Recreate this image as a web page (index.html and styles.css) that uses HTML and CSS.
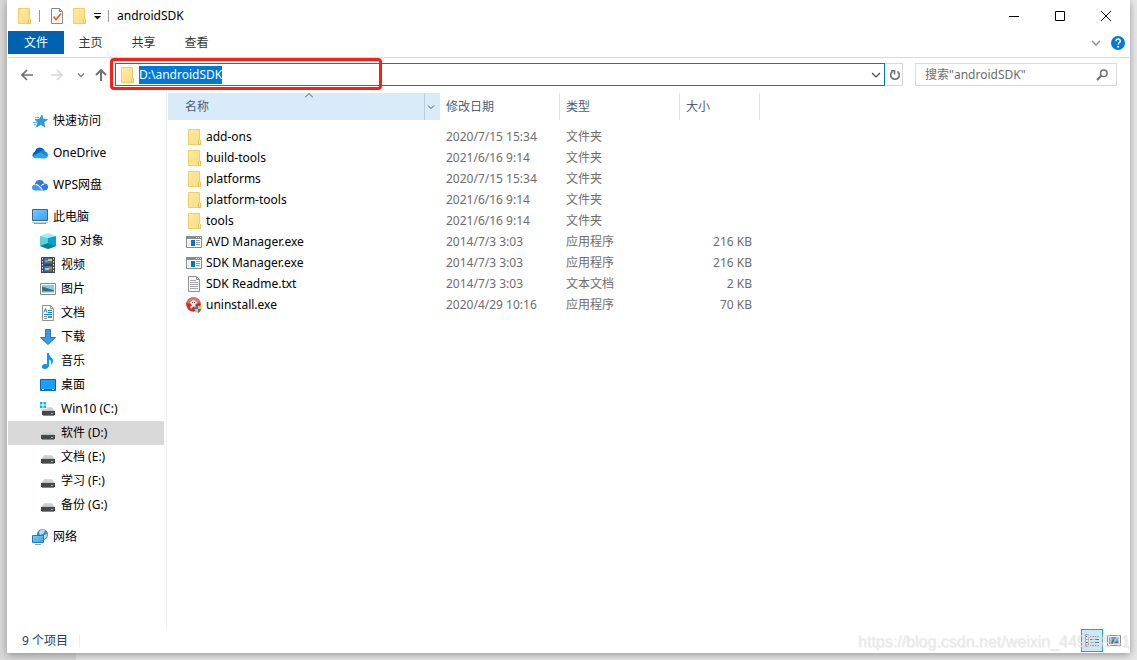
FILE: index.html
```html
<!DOCTYPE html>
<html lang="zh-CN">
<head>
<meta charset="utf-8">
<title>androidSDK</title>
<link rel="stylesheet" href="styles.css">
</head>
<body>
<svg class="defs" aria-hidden="true">
  <defs>
    <linearGradient id="gFolder" x1="0" y1="0" x2="1" y2="1"><stop offset="0" stop-color="#ffe9a2"/><stop offset="1" stop-color="#fcdc80"/></linearGradient>
    <linearGradient id="gScreen" x1="0" y1="0" x2="1" y2="1"><stop offset="0" stop-color="#7ccbff"/><stop offset="1" stop-color="#2ea3f8"/></linearGradient>
    <linearGradient id="gDrive" x1="0" y1="0" x2="0" y2="1"><stop offset="0" stop-color="#dcdfe0"/><stop offset="1" stop-color="#bcc0c2"/></linearGradient>
  </defs>
  <symbol id="folder" viewBox="0 0 16 16"><path d="M2.500.500h11v10.500h1v4.500h-12z" fill="url(#gFolder)" stroke="#f0cf62"/><path d="M12.500 15.500v-4l1-1 1 1v4z" fill="#ffe69a" stroke="#e9c452"/></symbol>
  <symbol id="app" viewBox="0 0 16 16"><path d="M.500 2.500h15v11H.500z" fill="#fff" stroke="#878c90"/><path d="M0 2h16v3H0z" fill="#878c90"/><path d="M10 3h1v1h-1zM12 3h1v1h-1zM14 3h1v1h-1z" fill="#fff"/><path d="M2 6h2v6H2z" fill="#e8e8e8"/><path d="M5 6h4v6H5z" fill="#0073d1"/><path d="M10 6.500h4M10 8.500h4M10 10.500h4" stroke="#999"/></symbol>
  <symbol id="text" viewBox="0 0 16 16"><path d="M2.500.500h8l3 3v12h-11z" fill="#fafafa" stroke="#909090"/><path d="M10.500.500v3h3" fill="none" stroke="#909090"/><path d="M4 4.500h6M4 6.500h8M4 8.500h8M4 10.500h8M4 12.500h8" stroke="#a8a8a8"/></symbol>
  <symbol id="drive" viewBox="0 0 16 16"><path d="M4 6h8l2.500 4h-13z" fill="url(#gDrive)"/><path d="M1 10h14v4H1z" fill="#45484a"/><path d="M2 14h12v1H2z" fill="#888"/><path d="M11 12h2v1h-2z" fill="#5dff56"/></symbol>
</svg>

<div class="window">
  <header class="titlebar">
    <svg class="icon"><use href="#folder"/></svg>
    <span class="bar"></span>
    <button class="plain" aria-label="属性"><svg class="icon" viewBox="0 0 16 16"><path d="M2.500.500h8l3 3v12h-11z" fill="#f8f8f8" stroke="#848a90"/><path d="M10.500.500v3h3" fill="none" stroke="#848a90"/><path d="M4.500 8.500l2.500 3 5-6" fill="none" stroke="#ee6030" stroke-width="1.800"/></svg></button>
    <button class="plain" aria-label="新建文件夹"><svg class="icon"><use href="#folder"/></svg></button>
    <button class="plain" aria-label="自定义快速访问工具栏"><svg class="tiny" viewBox="0 0 8 8"><path d="M1 1.500h7" stroke="#111"/><path d="M1 4h7L4.500 7.500z" fill="#111"/></svg></button>
    <span class="bar"></span>
    <h1 class="title">androidSDK</h1>
    <div class="controls">
      <button class="plain" aria-label="最小化"><svg class="ctl" viewBox="0 0 12 12"><path d="M1 6.500h10" stroke="#000"/></svg></button>
      <button class="plain" aria-label="最大化"><svg class="ctl" viewBox="0 0 12 12"><path d="M1.500 1.500h9v9h-9z" fill="none" stroke="#000"/></svg></button>
      <button class="plain" aria-label="关闭"><svg class="ctl" viewBox="0 0 12 12"><path d="M1 1l10 10M11 1L1 11" stroke="#000"/></svg></button>
    </div>
  </header>

  <nav class="ribbon">
    <button class="tab tab-file">文件</button>
    <button class="tab">主页</button>
    <button class="tab">共享</button>
    <button class="tab">查看</button>
    <div class="ribbon-end">
      <button class="plain" aria-label="展开功能区"><svg class="chev" viewBox="0 0 10 10"><path d="M1 3l4 4 4-4" fill="none" stroke="#8c8c8c" stroke-width="1.300"/></svg></button>
      <button class="plain" aria-label="帮助"><svg class="help" viewBox="0 0 14 14"><circle cx="7" cy="7" r="7" fill="#0078d7"/><path d="M5 5.300c0-3 4.300-2.800 4.300-.3C9.300 6.700 7.200 6.700 7.200 8.500" fill="none" stroke="#fff" stroke-width="1.500"/><circle cx="7.200" cy="10.700" r="1" fill="#fff"/></svg></button>
    </div>
  </nav>

  <div class="navbar">
    <button class="plain back" aria-label="后退"><svg class="arrow" viewBox="0 0 14 14"><path d="M13 7H2M7 2L2 7l5 5" fill="none" stroke="#707070" stroke-width="1.700"/></svg></button>
    <button class="plain forward" aria-label="前进"><svg class="arrow" viewBox="0 0 14 14"><path d="M1 7h11M7 2l5 5-5 5" fill="none" stroke="#d8d8d8" stroke-width="1.700"/></svg></button>
    <button class="plain recent" aria-label="最近位置"><svg class="tiny" viewBox="0 0 8 8"><path d="M1 2.500l3 3 3-3" fill="none" stroke="#808080" stroke-width="1.500"/></svg></button>
    <button class="plain up" aria-label="上移"><svg class="arrow" viewBox="0 0 14 14"><path d="M7 13V2M2 7l5-5 5 5" fill="none" stroke="#707070" stroke-width="1.900"/></svg></button>
    <div class="address-wrap">
      <div class="address">
        <svg class="icon"><use href="#folder"/></svg>
        <input id="path" class="path" type="text" aria-label="地址" value="D:\androidSDK" spellcheck="false">
        <button class="plain" aria-label="以前的位置"><svg class="chev" viewBox="0 0 10 10"><path d="M1 3l4 4 4-4" fill="none" stroke="#444" stroke-width="1.200"/></svg></button>
      </div>
      <button class="refresh" aria-label="刷新"><svg class="ctl" viewBox="0 0 12 12"><path d="M8.500 2.500A4.300 4.300 0 1 1 3.500 2.500" fill="none" stroke="#707070" stroke-width="1.600"/><path d="M2 1.800h3.500v3.700" fill="none" stroke="#707070" stroke-width="1.600"/></svg></button>
      <span class="callout"></span>
    </div>
    <div class="search">
      <input class="query" type="text" aria-label="搜索" placeholder="搜索&quot;androidSDK&quot;">
      <svg class="ctl" viewBox="0 0 12 12"><circle cx="7.800" cy="4.200" r="3.300" fill="none" stroke="#707070" stroke-width="1.500"/><path d="M5.300 6.700L1 11" stroke="#707070" stroke-width="2"/></svg>
    </div>
  </div>

  <main class="body">
    <aside class="tree">
      <a class="node" href="#"><svg class="icon" viewBox="0 0 16 16"><path d="M10 2l1 4 4.500.500-3.600 2.800 1 4.700L9 11.500 4.500 14l1.300-4.700L3 6.500l4.500-.5z" fill="#2b9be8" stroke="#1b7fc8" stroke-width=".6"/><path d="M3 4.500h4M1 9.500h4M2 11.500h2" stroke="#59b4ef"/></svg>快速访问</a>
      <a class="node" href="#"><svg class="icon" viewBox="0 0 16 16"><path d="M3 6.500a5 5 0 0 1 9.300-1.500l-3 4L1 12A4 4 0 0 1 3 6.500z" fill="#0a63b8"/><path d="M8 7C10 4.500 12.500 4.500 13.300 6.500a3.500 3.500 0 0 1 0 6.800H9z" fill="#1587d9"/><path d="M.500 11L8 7.300l7.700 4.200a3 3 0 0 1-2.700 1.800H3.500a3 3 0 0 1-3-2.300z" fill="#28a8ea"/></svg>OneDrive</a>
      <a class="node" href="#"><svg class="icon" viewBox="0 0 16 16"><path d="M3 7a4.800 4.800 0 0 1 9.300-.5 3.500 3.500 0 0 1 .5 7H9.500L4 7.500z" fill="#2f75f5"/><path d="M0 10.500C0 8 2.800 6.800 4.800 8.100l5 5.400H3A3 3 0 0 1 0 10.500z" fill="#3a9af8"/><path d="M4 7.700c2-.5 4 2 6.500 5.300M9 9c1-1.300 2-2 3.300-2" fill="none" stroke="#fff" stroke-width="1.100"/></svg>WPS网盘</a>
      <div class="group">
        <a class="node" href="#"><svg class="icon" viewBox="0 0 16 16"><path d="M.500.500h15v11H.500z" fill="url(#gScreen)" stroke="#39698c"/><path d="M2 14.500h12" stroke="#8d9ba5"/><path d="M0 13.500h16" stroke="#c3ccd2"/></svg>此电脑</a>
        <a class="node child" href="#"><svg class="icon" viewBox="0 0 16 16"><path d="M0 3l8-3 8 3-8 2z" fill="#a5edf1"/><path d="M0 3l8 2v11l-8-3z" fill="#5fcfda"/><path d="M16 3L8 5v11l8-3z" fill="#07a3cf"/><path d="M0 13l8-3 8 3-8 3z" fill="#087e93"/></svg>3D 对象</a>
        <a class="node child" href="#"><svg class="icon" viewBox="0 0 16 16"><path d="M1 0h14v16H1z" fill="#444"/><path d="M2.500 1v15M13.500 1v15" stroke="#eee" stroke-dasharray="1.500 1.500"/><path d="M4 1h8v6H4zM4 9h8v6H4z" fill="#3475c8"/><path d="M5 3h3v2H5zM9 10h3v2H9z" fill="#ed7b28"/><path d="M8 2h4v2H8zM5 11h4v2H5z" fill="#e8c931"/><path d="M4 6h8v1H4zM4 14h8v1H4z" fill="#38762b"/></svg>视频</a>
        <a class="node child" href="#"><svg class="icon" viewBox="0 0 16 16"><path d="M.500 2.500h15v11H.500z" fill="#fff" stroke="#8a8a8a"/><path d="M2 4h12v8H2z" fill="#87c9ee"/><path d="M2 6c5 0 8 3 12 3v3H2z" fill="#397175"/><path d="M2 10.500h12V12H2z" fill="#c1d9df"/></svg>图片</a>
        <a class="node child" href="#"><svg class="icon" viewBox="0 0 16 16"><path d="M2.500.500h8l3 3v12h-11z" fill="#fff" stroke="#909090"/><path d="M10.500.500v3h3" fill="none" stroke="#909090"/><path d="M4 7.500l1.500-4 1.500 4M8 5.500h4M8 7.500h4M4 9.500h8" fill="none" stroke="#0783cc"/><path d="M4 11.500h3M4 13.500h3" stroke="#888"/><path d="M8 11h4v2H8z" fill="#4793ad"/></svg>文档</a>
        <a class="node child" href="#"><svg class="icon" viewBox="0 0 16 16"><path d="M5.500.500h5v8h5L8 15.500.500 8.500h5z" fill="#3c9ae4" stroke="#2278bd"/></svg>下载</a>
        <a class="node child" href="#"><svg class="icon" viewBox="0 0 16 16"><path d="M7 0h2c0 4 4 4.500 4 8 0 2-1 3-2 4 1-3 0-5-2-5.500V12c0 3-2.500 4-4.500 4C1 16 1 12 4.500 11c1-.3 2 0 2.500.300z" fill="#0a97f3"/></svg>音乐</a>
        <a class="node child" href="#"><svg class="icon" viewBox="0 0 16 16"><path d="M.500 2.500h15v11H.500z" fill="#1aa0fb" stroke="#0567ae"/><path d="M1 12h14v2H1z" fill="#0567ae"/><path d="M2 12.500h2M12 12.500h2" stroke="#fff"/></svg>桌面</a>
        <a class="node child" href="#"><svg class="icon" viewBox="0 0 16 16"><path d="M0 1h2.500v2.500H0zM3.500 1H6v2.500H3.500zM0 4.500h2.500V7H0zM3.500 4.500H6V7H3.500z" fill="#00b7ef"/><path d="M7 6h5l2.500 4h-13L4 8h3z" fill="url(#gDrive)"/><path d="M2 10h13v4H2z" fill="#45484a"/><path d="M3 14h11v1H3z" fill="#888"/><path d="M11 12h2v1h-2z" fill="#5dff56"/></svg>Win10 (C:)</a>
        <a class="node child current" href="#"><svg class="icon"><use href="#drive"/></svg>软件 (D:)</a>
        <a class="node child" href="#"><svg class="icon"><use href="#drive"/></svg>文档 (E:)</a>
        <a class="node child" href="#"><svg class="icon"><use href="#drive"/></svg>学习 (F:)</a>
        <a class="node child" href="#"><svg class="icon"><use href="#drive"/></svg>备份 (G:)</a>
      </div>
      <a class="node" href="#"><svg class="icon" viewBox="0 0 16 16"><circle cx="10.500" cy="5.500" r="5.500" fill="#4b8bab"/><path d="M7 3c2-3 5-3 6-1l-2 3-3 1zM12 6l3-1c0 3-1 4-3 5z" fill="#b9dde9"/><path d="M.500 6.500h11v7H.500z" fill="url(#gScreen)" stroke="#2778aa"/><path d="M3 15.500h6" stroke="#8aa2b0"/></svg>网络</a>
    </aside>

    <section class="files">
      <table class="list">
        <colgroup><col class="c-name"><col class="c-date"><col class="c-type"><col class="c-size"></colgroup>
        <thead>
          <tr>
            <th class="sorted"><div class="head"><span class="label">名称</span><button class="drop" aria-label="筛选名称"><svg class="tiny" viewBox="0 0 8 8"><path d="M1 2.500l3 3 3-3" fill="none" stroke="#555"/></svg></button></div><svg class="tiny sort" viewBox="0 0 8 8"><path d="M0 4.500l4-4 4 4" fill="none" stroke="#555"/></svg></th>
            <th>修改日期</th><th>类型</th><th>大小</th>
          </tr>
        </thead>
        <tbody>
          <tr><td><span class="file"><svg class="icon"><use href="#folder"/></svg>add-ons</span></td><td>2020/7/15 15:34</td><td>文件夹</td><td></td></tr>
          <tr><td><span class="file"><svg class="icon"><use href="#folder"/></svg>build-tools</span></td><td>2021/6/16 9:14</td><td>文件夹</td><td></td></tr>
          <tr><td><span class="file"><svg class="icon"><use href="#folder"/></svg>platforms</span></td><td>2020/7/15 15:34</td><td>文件夹</td><td></td></tr>
          <tr><td><span class="file"><svg class="icon"><use href="#folder"/></svg>platform-tools</span></td><td>2021/6/16 9:14</td><td>文件夹</td><td></td></tr>
          <tr><td><span class="file"><svg class="icon"><use href="#folder"/></svg>tools</span></td><td>2021/6/16 9:14</td><td>文件夹</td><td></td></tr>
          <tr><td><span class="file"><svg class="icon"><use href="#app"/></svg>AVD Manager.exe</span></td><td>2014/7/3 3:03</td><td>应用程序</td><td>216 KB</td></tr>
          <tr><td><span class="file"><svg class="icon"><use href="#app"/></svg>SDK Manager.exe</span></td><td>2014/7/3 3:03</td><td>应用程序</td><td>216 KB</td></tr>
          <tr><td><span class="file"><svg class="icon"><use href="#text"/></svg>SDK Readme.txt</span></td><td>2014/7/3 3:03</td><td>文本文档</td><td>2 KB</td></tr>
          <tr><td><span class="file"><svg class="icon" viewBox="0 0 16 16"><circle cx="7.500" cy="7.500" r="7.300" fill="#c8302b"/><path d="M1 5.500C3-1.500 12-1.500 14 5.500c-4 2-9 2-13 0z" fill="#e5716b"/><path d="M4.500 5l6 6M10.500 5l-6 6" stroke="#eee" stroke-width="1.800"/><circle cx="7.500" cy="5.500" r="2.600" fill="#e4e4e4"/><path d="M6 5h1v1H6zM8 5h1v1H8z" fill="#555"/><path d="M12 8.500c-1 .6-2 1-3.500 1V12H12z" fill="#2f78cf"/><path d="M12 8.500c1 .6 2 1 3.500 1V12H12zM8.500 12H12v4c-2-1-3-2.500-3.500-4z" fill="#f5c53a"/><path d="M12 12h3.500c-.5 1.500-1.500 3-3.500 4z" fill="#2f78cf"/></svg>uninstall.exe</span></td><td>2020/4/29 10:16</td><td>应用程序</td><td>70 KB</td></tr>
        </tbody>
      </table>
    </section>
  </main>

  <footer class="status">
    <span class="count">9 个项目</span>
    <div class="views">
      <button class="view view-on" aria-label="详细信息"><svg class="icon" viewBox="0 0 16 16"><path d="M1.500 1.500h3v12h-3z" fill="#fff" stroke="#aaa"/><path d="M2 3.500h2M2 6.500h2M2 9.500h2" stroke="#567"/><path d="M2 12h2" stroke="#d44"/><path d="M6 3.500h10M6 6.500h10M6 9.500h10M6 12.500h10" stroke="#678" stroke-dasharray="4 1"/></svg></button>
      <button class="view" aria-label="大图标"><svg class="icon" viewBox="0 0 16 16"><path d="M1.500 2.500h13v10h-13z" fill="#fff" stroke="#888"/><path d="M3 4h10v7H3z" fill="#5b9be0"/><path d="M3 8l4-1 3 2 3-1v3H3z" fill="#30665b"/></svg></button>
    </div>
    <span class="watermark">https://blog.csdn.net/weixin_44993941</span>
  </footer>
</div>
<script src="main.js"></script>
</body>
</html>
```
FILE: styles.css
```css
* { box-sizing: border-box; }
body {
  margin: 0;
  min-height: 100vh;
  display: flex;
  padding: 0 7px 7px;
  background: linear-gradient(90deg, #d9d9d9 76px, #e8e8e8 76px);
  font: 12px/20px "Noto Sans", "Noto Sans CJK SC", sans-serif;
  color: #000;
}
button, input { font: inherit; color: inherit; }
.defs { position: absolute; width: 0; height: 0; }
.icon { width: 16px; height: 16px; flex: none; display: block; }
.tiny { width: 8px; height: 8px; display: block; }
.ctl { width: 12px; height: 12px; flex: none; display: block; }
.chev { width: 10px; height: 10px; display: block; }
.arrow, .help { width: 14px; height: 14px; display: block; }
.plain { border: 0; padding: 0; background: none; flex: none; }

.window {
  flex: 1;
  display: flex;
  flex-direction: column;
  background: #fff;
  box-shadow: 0 2px 8px rgba(0, 0, 0, .35);
}
.titlebar { display: flex; align-items: center; height: 31px; padding-left: 9px; }
.titlebar .bar { width: 1px; height: 12px; margin: 0 9px 0 7px; background: #999; }
.titlebar .plain + .plain { margin-left: 6px; }
.title { margin: 0 0 0 -1px; font-size: 12px; font-weight: 400; }
.controls { display: flex; gap: 28px; margin-left: auto; padding-right: 18px; }
.titlebar .controls .plain + .plain { margin-left: 6px; }

.ribbon { display: flex; height: 27px; padding-bottom: 3px; border-bottom: 1px solid #dadbdc; margin: 0 1px; }
.tab { border: 0; background: none; padding: 1px 0 0; width: 53px; color: #333; }
.tab-file { width: 56px; background: #0063b1; color: #fff; }
.ribbon-end { display: flex; align-items: center; gap: 10px; margin-left: auto; padding-right: 4px; }

.navbar { display: flex; align-items: center; padding: 5px 13px 6px; }
.forward { margin-left: 16px; }
.recent { margin-left: 13px; }
.up { margin-left: 9px; }
.address-wrap { position: relative; display: flex; flex: 1; height: 23px; margin-left: 7px; }
.address { display: flex; flex: 1; align-items: center; padding: 0 3px 0 3px; border: 1px solid #0078d7; }
.path { flex: 1; min-width: 0; height: 18px; margin-left: 4px; padding: 0; border: 0; outline: 0; background: none; caret-color: transparent; }
.path::selection { background: #0078d7; color: #fff; }
.refresh { width: 18px; padding: 0 0 0 4px; border: 1px solid #d9d9d9; border-left: 0; background: #fff; }
.callout { position: absolute; left: -5px; top: -5px; width: 272px; height: 32px; border: 3px solid #fc1d13; border-radius: 4px; pointer-events: none; }
.search { display: flex; align-items: center; width: 202px; height: 23px; margin-left: 12px; padding: 0 8px 0 9px; border: 1px solid #d9d9d9; }
.query { flex: 1; min-width: 0; padding: 0; border: 0; outline: 0; background: none; }
.query::placeholder { color: #6d6d6d; opacity: 1; }

.body { display: flex; flex: 1; }
.tree { display: flex; flex-direction: column; gap: 8px; width: 160px; padding: 17px 2px 0 1px; border-right: 1px solid #f0f0f0; }
.node { display: flex; align-items: center; gap: 5px; height: 24px; padding-left: 24px; color: #000; text-decoration: none; }
.child { padding-left: 32px; }
.current { background: #d9d9d9; }

.files { flex: 1; padding: 1px 0 0 1px; }
.list { table-layout: fixed; width: 592px; border-collapse: separate; border-spacing: 0; }
.c-name { width: 272px; }
.c-date, .c-type { width: 120px; }
.c-size { width: 80px; }
.list th { height: 27px; padding: 0 0 0 6px; border-right: 1px solid #e2e2e2; font-weight: 400; text-align: left; color: #4c607a; }
.list .sorted { position: relative; padding: 0; border: 0; background: #d9ebf9; }
.head { display: flex; height: 27px; align-items: center; }
.label { flex: 1; padding-left: 17px; }
.drop { width: 16px; height: 27px; padding: 0 0 0 2px; border: 0; border-left: 1px solid #b9cede; background: none; }
.sort { position: absolute; left: 50%; top: 0; margin-left: 1px; }
.list tbody::before { content: ""; display: block; height: 6px; }
.list td { height: 21px; padding: 0 0 0 6px; color: #6d6d6d; }
.list td:first-child { padding-left: 18px; color: #000; }
.list td:last-child { padding: 0 8px 0 0; text-align: right; }
.file { display: flex; align-items: center; gap: 4px; }

.status { position: relative; display: flex; align-items: center; height: 25px; padding: 0 5px 0 15px; color: #1e395b; }
.count { padding-right: 11px; border-right: 1px solid #eee; line-height: 14px; }
.views { display: flex; margin-left: auto; }
.view { display: grid; place-items: center; width: 22px; height: 23px; padding: 0; border: 1px solid transparent; background: none; }
.view-on { border-color: #26a0da; background: #cce8f6; }
.watermark { position: absolute; right: 0; bottom: 1px; font: 16px/20px "Liberation Sans", Arial, sans-serif; color: rgba(228, 228, 228, .75); text-shadow: 1px 1px 0 rgba(200, 200, 200, .3); white-space: nowrap; pointer-events: none; }
```
FILE: main.js
```js
const path = document.getElementById("path");
path.focus();
path.select();
```
